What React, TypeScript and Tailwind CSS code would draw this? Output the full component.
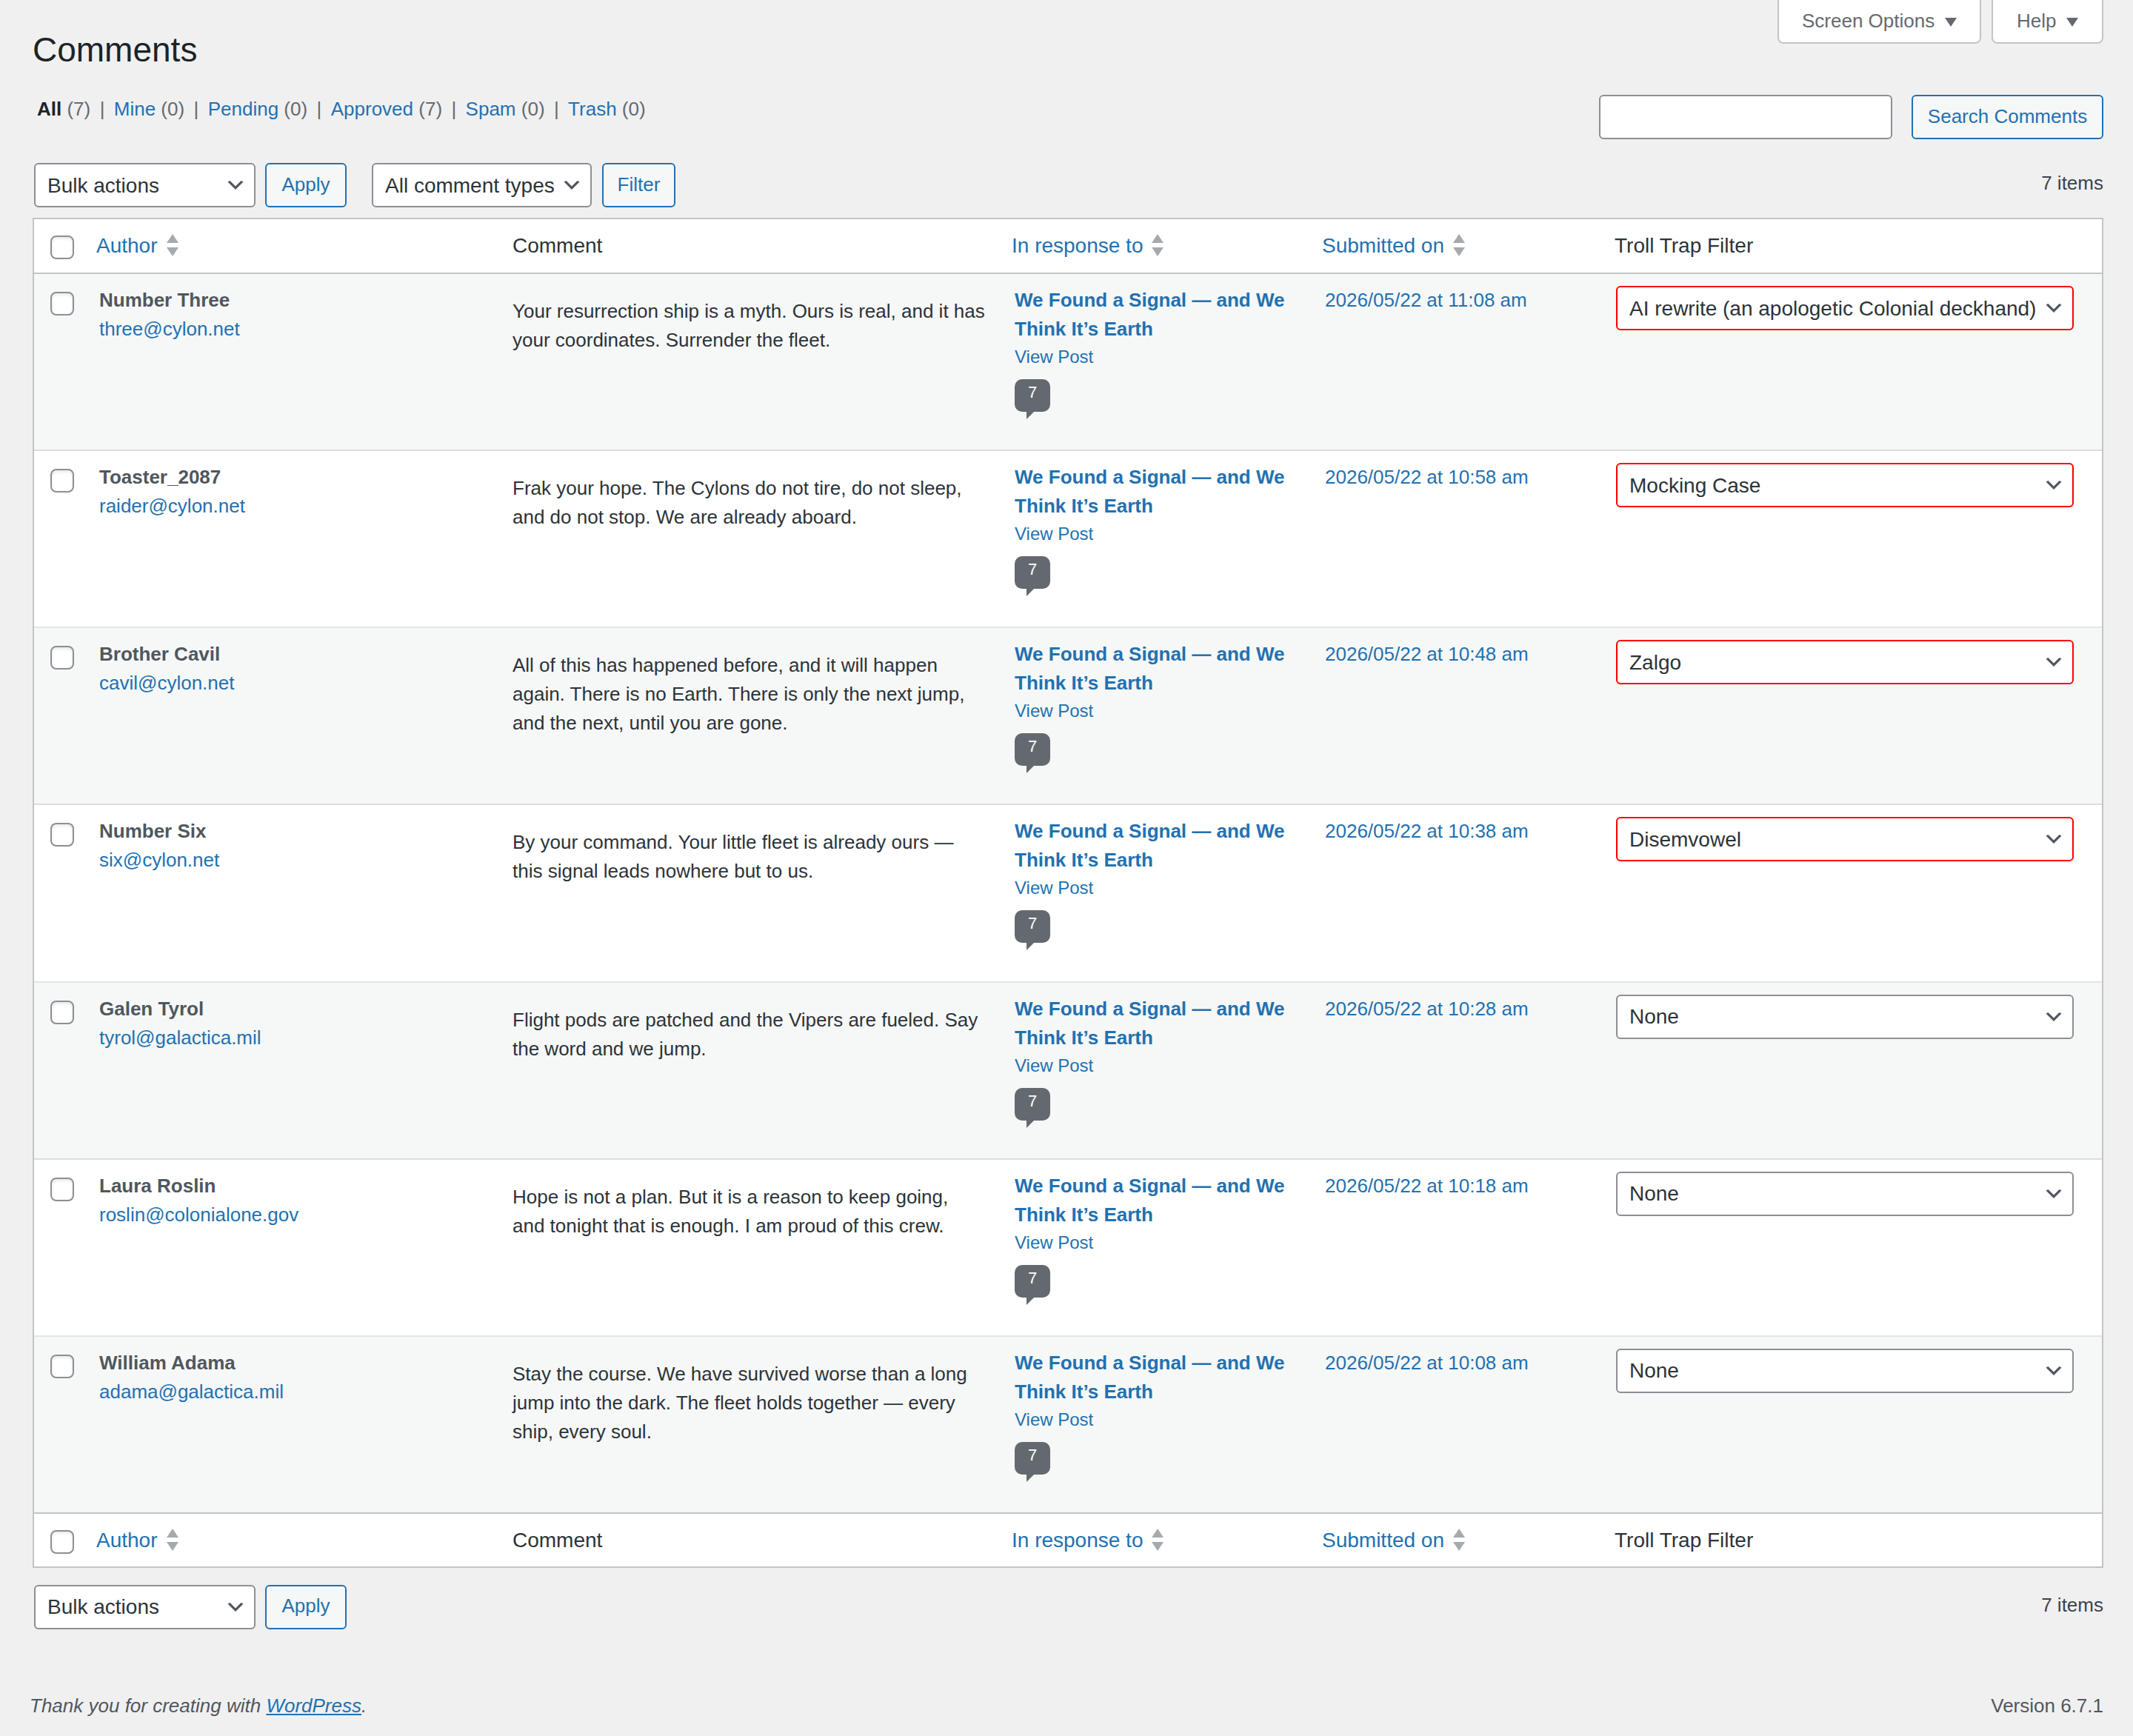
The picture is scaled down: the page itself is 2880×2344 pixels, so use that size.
import { ReactNode } from "react";

const comments = [
  { name: "Number Three", email: "three@cylon.net", text: "Your resurrection ship is a myth. Ours is real, and it has\nyour coordinates. Surrender the fleet.", date: "2026/05/22 at 11:08 am", filter: "AI rewrite (an apologetic Colonial deckhand)", flagged: true },
  { name: "Toaster_2087", email: "raider@cylon.net", text: "Frak your hope. The Cylons do not tire, do not sleep,\nand do not stop. We are already aboard.", date: "2026/05/22 at 10:58 am", filter: "Mocking Case", flagged: true },
  { name: "Brother Cavil", email: "cavil@cylon.net", text: "All of this has happened before, and it will happen\nagain. There is no Earth. There is only the next jump,\nand the next, until you are gone.", date: "2026/05/22 at 10:48 am", filter: "Zalgo", flagged: true },
  { name: "Number Six", email: "six@cylon.net", text: "By your command. Your little fleet is already ours —\nthis signal leads nowhere but to us.", date: "2026/05/22 at 10:38 am", filter: "Disemvowel", flagged: true },
  { name: "Galen Tyrol", email: "tyrol@galactica.mil", text: "Flight pods are patched and the Vipers are fueled. Say\nthe word and we jump.", date: "2026/05/22 at 10:28 am", filter: "None", flagged: false },
  { name: "Laura Roslin", email: "roslin@colonialone.gov", text: "Hope is not a plan. But it is a reason to keep going,\nand tonight that is enough. I am proud of this crew.", date: "2026/05/22 at 10:18 am", filter: "None", flagged: false },
  { name: "William Adama", email: "adama@galactica.mil", text: "Stay the course. We have survived worse than a long\njump into the dark. The fleet holds together — every\nship, every soul.", date: "2026/05/22 at 10:08 am", filter: "None", flagged: false },
];

const filterOptions = ["None", "Mocking Case", "Zalgo", "Disemvowel", "AI rewrite (an apologetic Colonial deckhand)"];

function Chevron() {
  return (
    <svg viewBox="0 0 20 20" className="pointer-events-none absolute right-[12px] top-1/2 h-[30px] w-[30px] -translate-y-1/2">
      <path d="M5 6l5 5 5-5 2 1-7 7-7-7 2-1z" fill="#50575e" />
    </svg>
  );
}

function Select({ options, value, className }: { options: string[]; value: string; className: string }) {
  return (
    <div className={`relative h-[60px] ${className}`}>
      <select
        defaultValue={value}
        className="h-full w-full appearance-none rounded-[6px] border-2 border-inherit bg-white pl-[16px] pr-[48px] text-[28px] text-[#2c3338]"
      >
        {options.map((o) => (
          <option key={o}>{o}</option>
        ))}
      </select>
      <Chevron />
    </div>
  );
}

function Button({ children, className }: { children: ReactNode; className: string }) {
  return (
    <button className={`h-[60px] rounded-[6px] border-2 border-[#2271b1] bg-[#f6f7f7] pb-[2px] text-[26px] text-[#2271b1] ${className}`}>
      {children}
    </button>
  );
}

function Checkbox() {
  return (
    <input
      type="checkbox"
      className="block h-[32px] w-[32px] appearance-none rounded-[8px] border-2 border-[#8c8f94] bg-white shadow-[inset_0_2px_4px_rgba(0,0,0,0.1)]"
    />
  );
}

function SortArrows() {
  return (
    <svg viewBox="0 0 16 30" className="h-[30px] w-[16px] shrink-0">
      <polygon points="8,0 16,12 0,12" fill="#a7aaad" />
      <polygon points="0,18 16,18 8,30" fill="#a7aaad" />
    </svg>
  );
}

function SortLink({ label }: { label: string }) {
  return (
    <a className="flex items-center gap-[12px] text-[#2271b1]">
      {label}
      <SortArrows />
    </a>
  );
}

function HeaderRow({ footer }: { footer?: boolean }) {
  const cls = `p-0 pl-[20px] text-left text-[28px] font-normal text-[#2c3338] ${footer ? "" : "pb-[4px]"}`;
  return (
    <tr className={footer ? "h-[71px]" : "h-[74px] shadow-[inset_0_-2px_0_#c3c4c7]"}>
      <td className={`pl-[22px] align-middle ${footer ? "pt-[5px]" : "pt-[2px]"}`}>
        <Checkbox />
      </td>
      <th className={cls}>
        <SortLink label="Author" />
      </th>
      <th className={cls}>Comment</th>
      <th className={cls}>
        <SortLink label="In response to" />
      </th>
      <th className={cls}>
        <SortLink label="Submitted on" />
      </th>
      <th className={cls}>Troll Trap Filter</th>
    </tr>
  );
}

function Bubble() {
  return (
    <span className="relative mt-[12px] block h-[44px] w-[48px] rounded-[10px] bg-[#646970] pt-[2px] text-center text-[22px] leading-[32px] text-white after:absolute after:left-[16px] after:top-full after:border-r-[10px] after:border-t-[10px] after:border-r-transparent after:border-t-[#646970] after:content-['']">
      7
    </span>
  );
}

function Triangle() {
  return (
    <svg viewBox="0 0 16 12" className="mt-[4px] h-[12px] w-[16px]">
      <polygon points="0,0 16,0 8,12" fill="#646970" />
    </svg>
  );
}

function Tab({ label, className }: { label: string; className: string }) {
  return (
    <button className={`flex h-[59px] items-center gap-[14px] rounded-b-[8px] border-2 border-t-0 border-[#c3c4c7] bg-white pb-[1px] text-[26px] text-[#646970] ${className}`}>
      {label}
      <Triangle />
    </button>
  );
}

function Counts() {
  const views = [
    ["Mine", "0"],
    ["Pending", "0"],
    ["Approved", "7"],
    ["Spam", "0"],
    ["Trash", "0"],
  ];
  return (
    <ul className="flex pl-[6px] text-[26px] leading-[39px] text-[#646970]">
      <li>
        <b className="text-[#1d2327]">All</b> (7)
      </li>
      {views.map(([label, n]) => (
        <li key={label} className="whitespace-pre">
          <span className="mx-[12.4px]">|</span>
          <a className="text-[#2271b1]">{label}</a> ({n})
        </li>
      ))}
    </ul>
  );
}

export default function App() {
  return (
    <div className="flex min-h-[2344px] flex-col bg-[#f0f0f1] pl-[44px] pr-[40px] font-['Liberation_Sans',sans-serif] text-[26px] leading-[39px] text-[#3c434a]">
      <div className="flex h-[128px] items-start justify-between">
        <h1 className="mt-[37px] text-[46px] font-normal leading-[60px] text-[#1d2327]">Comments</h1>
        <div className="flex gap-[14px]">
          <Tab label="Screen Options" className="w-[275px] pl-[31px]" />
          <Tab label="Help" className="w-[151px] pl-[32px]" />
        </div>
      </div>

      <div className="flex h-[60px] items-start justify-between">
        <Counts />
        <form className="flex gap-[26px]">
          <input className="h-[60px] w-[396px] rounded-[6px] border-2 border-[#8c8f94] bg-white" />
          <Button className="w-[259px]">Search Comments</Button>
        </form>
      </div>

      <div className="mt-[32px] flex h-[60px] items-start pl-[2px]">
        <Select options={["Bulk actions"]} value="Bulk actions" className="w-[299px] border-[#8c8f94]" />
        <Button className="ml-[13px] w-[110px]">Apply</Button>
        <Select options={["All comment types"]} value="All comment types" className="ml-[34px] w-[297px] border-[#8c8f94]" />
        <Button className="ml-[14px] w-[99px]">Filter</Button>
        <span className="ml-auto mt-[8px]">7 items</span>
      </div>

      <div className="mt-[14px] border-2 border-[#c3c4c7] bg-white">
        <table className="w-full table-fixed">
          <colgroup>
            <col className="w-[64px]" />
            <col className="w-[562px]" />
            <col className="w-[674px]" />
            <col className="w-[419px]" />
            <col className="w-[395px]" />
            <col />
          </colgroup>
          <thead>
            <HeaderRow />
          </thead>
          <tbody>
            {comments.map((c, i) => (
              <tr
                key={c.name}
                className={`h-[239.14px] shadow-[inset_0_-2px_0_rgba(0,0,0,0.1)] last:shadow-[inset_0_-2px_0_#c3c4c7] ${i % 2 === 0 ? "bg-[#f6f7f7]" : "bg-white"}`}
              >
                <td className="pl-[22px] pt-[24px] align-top">
                  <Checkbox />
                </td>
                <td className="pl-[24px] pt-[16px] align-top">
                  <div className="font-bold text-[#50575e]">{c.name}</div>
                  <a className="text-[#2271b1]">{c.email}</a>
                </td>
                <td className="pl-[20px] pt-[31px] align-top text-[#2c3338]">
                  <p className="whitespace-pre-line">{c.text}</p>
                </td>
                <td className="pl-[24px] pt-[16px] align-top">
                  <a className="block whitespace-pre-line font-bold text-[#2271b1]">{"We Found a Signal — and We\nThink It’s Earth"}</a>
                  <a className="block text-[24px] leading-[36px] text-[#2271b1]">View Post</a>
                  <Bubble />
                </td>
                <td className="pl-[24px] pt-[16px] align-top text-[#2271b1]">{c.date}</td>
                <td className="pl-[22px] pt-[16px] align-top">
                  <Select
                    options={filterOptions}
                    value={c.filter}
                    className={`w-[618px] ${c.flagged ? "border-[#ff0000]" : "border-[#8c8f94]"}`}
                  />
                </td>
              </tr>
            ))}
          </tbody>
          <tfoot>
            <HeaderRow footer />
          </tfoot>
        </table>
      </div>

      <div className="mt-[23px] flex h-[60px] items-start pl-[2px]">
        <Select options={["Bulk actions"]} value="Bulk actions" className="w-[299px] border-[#8c8f94]" />
        <Button className="ml-[13px] w-[110px]">Apply</Button>
        <span className="ml-auto mt-[8px]">7 items</span>
      </div>

      <div className="mt-[84px] flex justify-between text-[#50575e]">
        <p className="-ml-[4px] italic">
          Thank you for creating with <a className="text-[#2271b1] underline">WordPress</a>.
        </p>
        <p>Version 6.7.1</p>
      </div>
    </div>
  );
}
